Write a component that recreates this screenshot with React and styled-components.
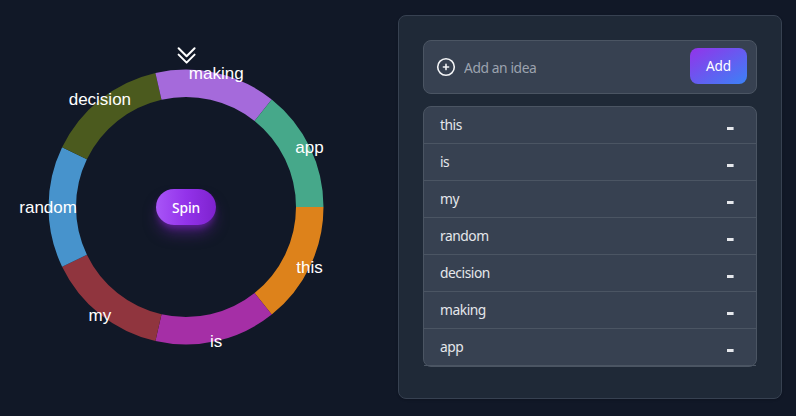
import React from "react";
import styled, { createGlobalStyle } from "styled-components";

const Global = createGlobalStyle`
  *, *::before, *::after { box-sizing: border-box; }
  body {
    margin: 0;
    background: #111827;
    color: #e5e7eb;
    font-family: "Noto Sans", sans-serif;
    font-size: 14px;
    line-height: 20px;
    overflow: hidden;
  }
  button, input { font: inherit; border: 0; margin: 0; }
`;

const Page = styled.main`
  display: grid;
  grid-template-columns: 372px 384px;
  column-gap: 26px;
  align-items: start;
  height: 416px;
  padding-top: 15px;
`;

const WheelArea = styled.section`
  display: grid;
  height: 384px;
  > * { grid-area: 1 / 1; }
`;

const WheelDrawing = styled.svg`
  display: block;
  width: 372px;
  height: 384px;
  overflow: visible;
`;

const SliceLabel = styled.text`
  fill: #fff;
  font-family: "Liberation Sans", Arial, sans-serif;
  font-size: 17px;
  text-anchor: middle;
`;

const SpinButton = styled.button`
  place-self: center;
  width: 60px;
  height: 36px;
  padding: 2px 0 0;
  border-radius: 18px;
  color: #fff;
  font-family: "Noto Sans", sans-serif;
  font-size: 13.8px;
  font-weight: 500;
  letter-spacing: -0.1px;
  background: linear-gradient(to right, #a855f7, #9333ea 50%, #7e22ce);
  box-shadow: 0 10px 15px -3px rgba(107, 33, 168, 0.6), 0 4px 6px -2px rgba(107, 33, 168, 0.8);
`;

const Panel = styled.section`
  display: flex;
  flex-direction: column;
  gap: 12px;
  height: 384px;
  padding: 24px;
  border: 1px solid #374151;
  border-radius: 8px;
  background: #1f2937;
  box-shadow: 0 1px 3px rgba(0, 0, 0, 0.1), 0 1px 2px -1px rgba(0, 0, 0, 0.1);
`;

const IdeaForm = styled.form`
  display: flex;
  align-items: center;
  height: 54px;
  padding: 0 9px 0 12px;
  border: 1px solid #4b5563;
  border-radius: 8px;
  background: #374151;
`;

const PlusIcon = styled.svg`
  width: 20px;
  height: 20px;
  flex: none;
`;

const IdeaInput = styled.input`
  flex: 1;
  min-width: 0;
  height: 36px;
  padding: 0 8px;
  color: #e5e7eb;
  background: transparent;
  font-size: 13.8px;
  letter-spacing: -0.4px;
  outline: 0;
  &::placeholder { color: #9ca3af; opacity: 1; }
`;

const AddButton = styled.button`
  width: 57px;
  height: 36px;
  margin-bottom: 2px;
  padding: 0;
  border-radius: 8px;
  color: #fff;
  font-size: 13.6px;
  letter-spacing: -0.1px;
  background: linear-gradient(to bottom right, #9333ea, #3b82f6);
`;

const IdeaList = styled.ul`
  margin: 0;
  padding: 0;
  height: 261px;
  list-style: none;
  border: 1px solid #4b5563;
  border-radius: 8px;
  background: #374151;
`;

const IdeaRow = styled.li`
  display: flex;
  align-items: center;
  justify-content: space-between;
  height: 37px;
  padding: 0 22px 0 16px;
  border-bottom: 1px solid #4b5563;
  font-size: 13.8px;
  letter-spacing: -0.45px;
`;

const RemoveButton = styled.button`
  display: flex;
  align-items: flex-end;
  width: 7px;
  height: 10px;
  padding: 0;
  background: transparent;
  &::after {
    content: "";
    width: 7px;
    height: 3px;
    background: linear-gradient(to right, #e5e7eb 6px, #9ca3af 6px);
  }
`;

const ideas = [
  { name: "this", color: "#dd821b" },
  { name: "is", color: "#a52fa6" },
  { name: "my", color: "#90353e" },
  { name: "random", color: "#4793cc" },
  { name: "decision", color: "#4b5a1e" },
  { name: "making", color: "#a56adb" },
  { name: "app", color: "#46a88a" },
];

const CENTER = { x: 186, y: 192 };
const OUTER = 137.5;
const INNER = 110;
const STEP = (Math.PI * 2) / ideas.length;

const point = (radius, angle) =>
  `${CENTER.x + radius * Math.cos(angle)} ${CENTER.y + radius * Math.sin(angle)}`;

const slicePath = (index) => {
  const from = index * STEP;
  const to = from + STEP;
  return `M${point(OUTER, from)} A${OUTER} ${OUTER} 0 0 1 ${point(OUTER, to)} L${point(INNER, to)} A${INNER} ${INNER} 0 0 0 ${point(INNER, from)}Z`;
};

function Wheel() {
  return (
    <WheelArea>
      <WheelDrawing viewBox="0 0 372 384">
        {ideas.map((idea, i) => (
          <path key={idea.name} d={slicePath(i)} fill={idea.color} />
        ))}
        {ideas.map((idea, i) => {
          const angle = (i + 0.5) * STEP;
          return (
            <SliceLabel
              key={idea.name}
              x={CENTER.x - 0.4 + OUTER * Math.cos(angle)}
              y={CENTER.y + OUTER * Math.sin(angle) + 6}
            >
              {idea.name}
            </SliceLabel>
          );
        })}
        <path
          d="M178.6 33.3l8 8 8-8M178.6 39.6l8 8 8-8"
          fill="none"
          stroke="#fff"
          strokeWidth="2"
          strokeLinecap="round"
          strokeLinejoin="round"
        />
      </WheelDrawing>
      <SpinButton type="button">Spin</SpinButton>
    </WheelArea>
  );
}

export default function App() {
  return (
    <>
      <Global />
      <Page>
        <Wheel />
        <Panel>
          <IdeaForm>
            <PlusIcon viewBox="0 0 20 20" fill="none" stroke="#f3f4f6" strokeLinecap="round">
              <circle cx="10" cy="10" r="8.3" strokeWidth="1.6" />
              <path d="M10 7.4v5.2M7.4 10h5.2" strokeWidth="1.6" />
            </PlusIcon>
            <IdeaInput placeholder="Add an idea" aria-label="Add an idea" />
            <AddButton type="button">Add</AddButton>
          </IdeaForm>
          <IdeaList>
            {ideas.map((idea) => (
              <IdeaRow key={idea.name}>
                <span>{idea.name}</span>
                <RemoveButton type="button" aria-label={`Remove ${idea.name}`} />
              </IdeaRow>
            ))}
          </IdeaList>
        </Panel>
      </Page>
    </>
  );
}
